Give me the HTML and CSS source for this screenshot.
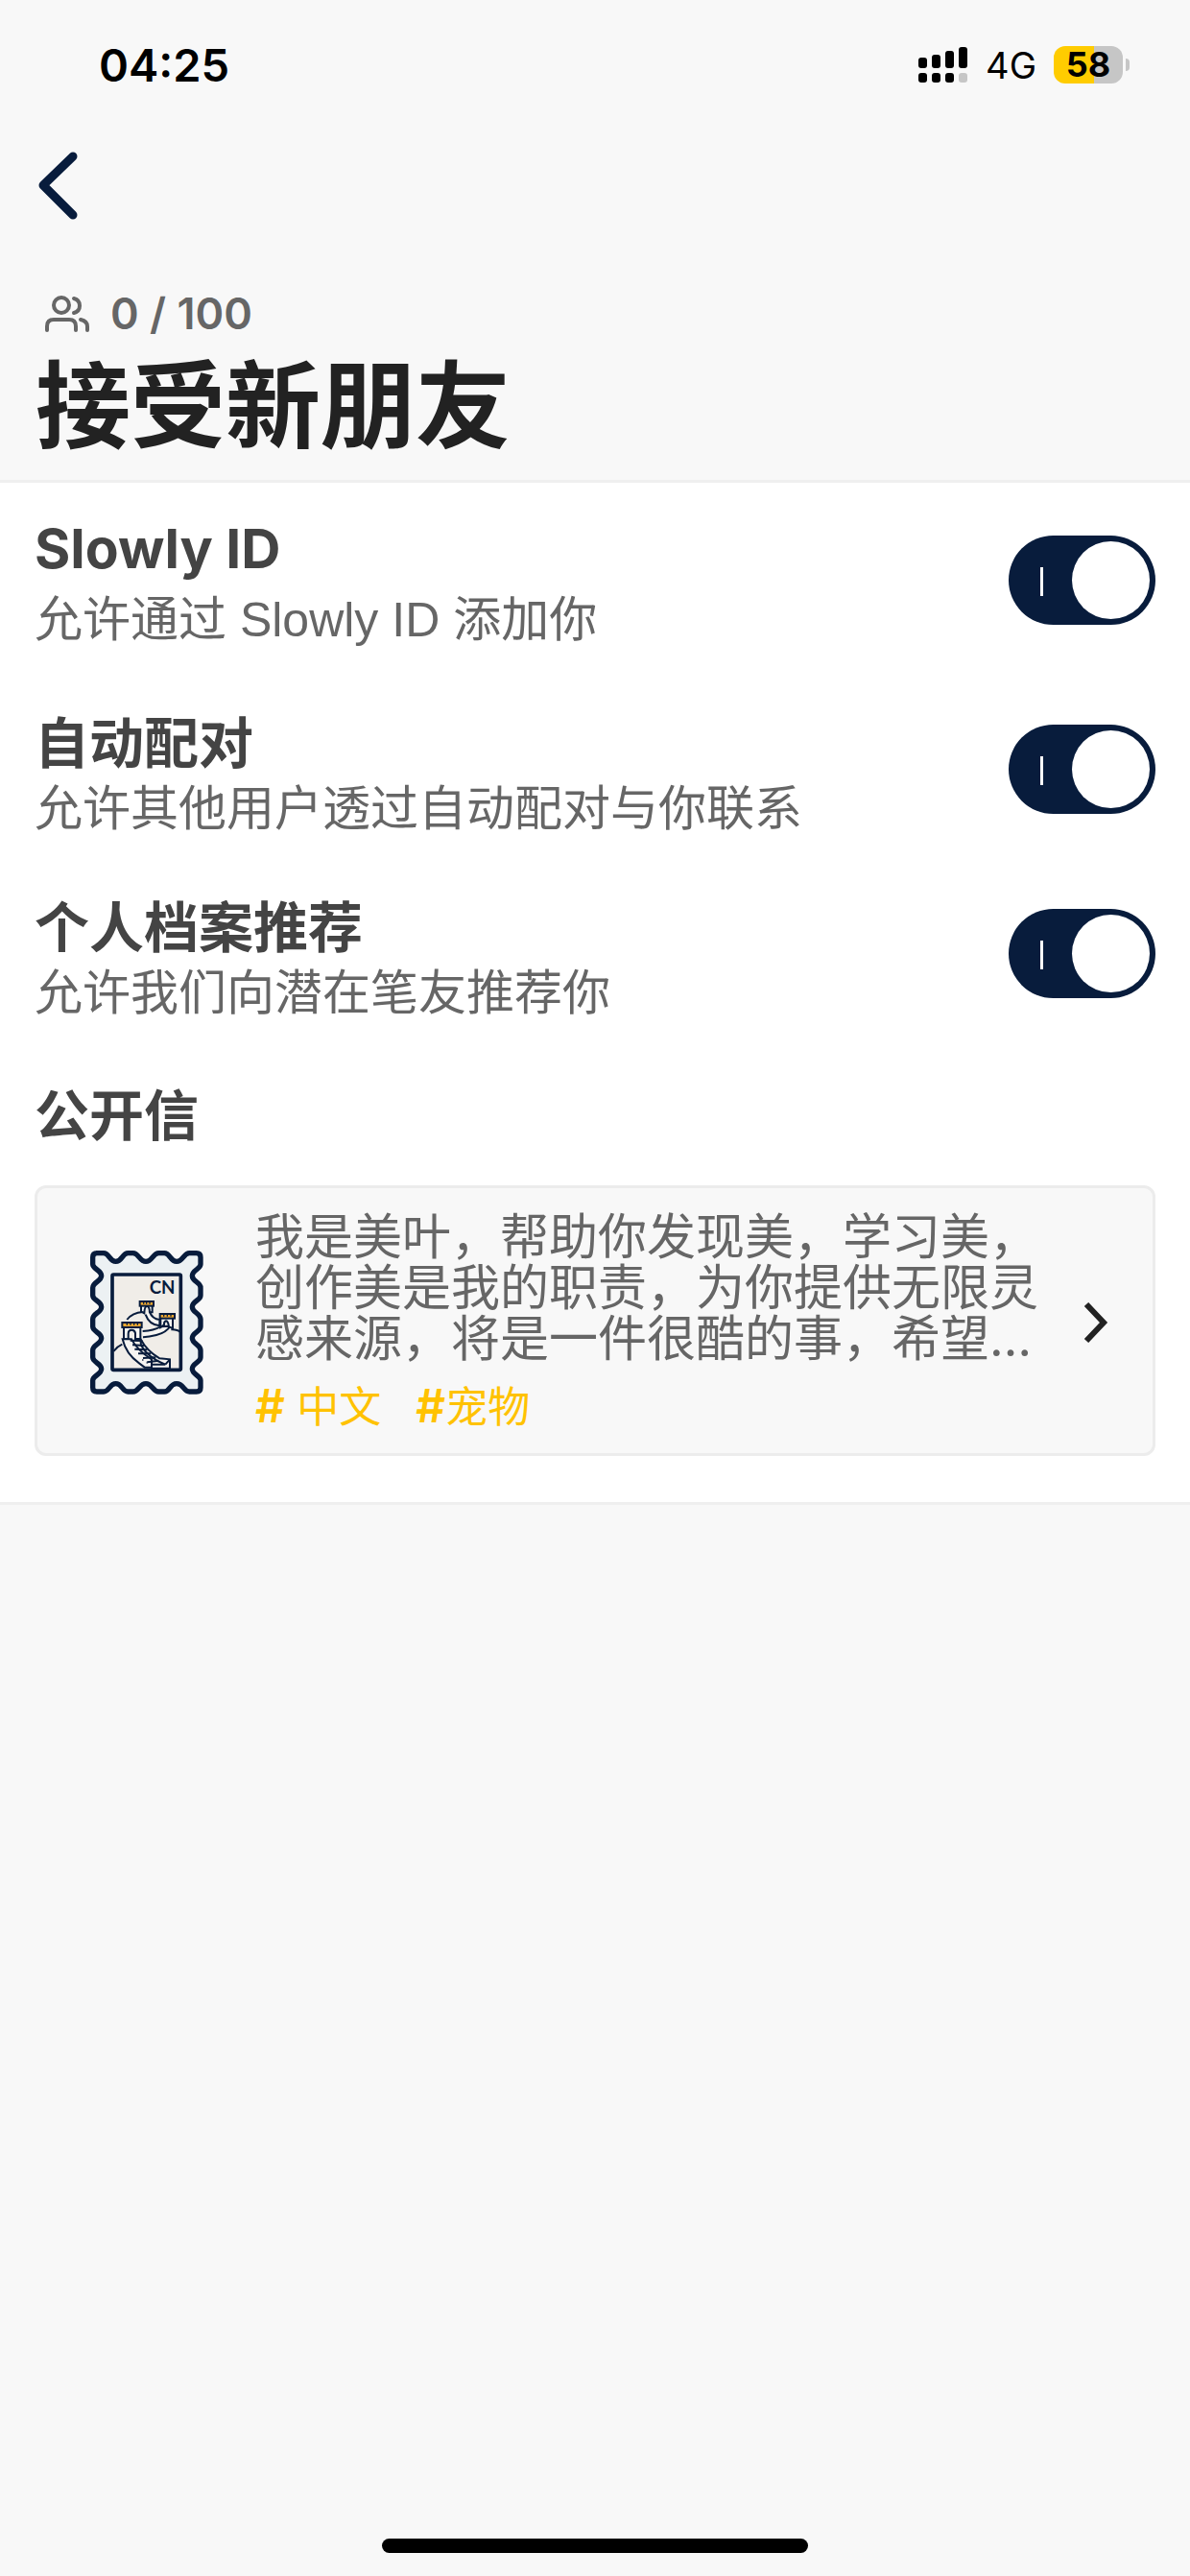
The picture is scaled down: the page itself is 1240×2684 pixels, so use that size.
FILE: index.html
```html
<!DOCTYPE html>
<html lang="zh-CN">
<head>
  <meta charset="UTF-8" />
  <meta name="viewport" content="width=device-width, initial-scale=1" />
  <title>接受新朋友</title>
  <link rel="stylesheet" href="styles.css">
</head>
<body>

<!-- Status bar -->
<div class="status-bar">
  <span class="time">04:25</span>
  <div class="status-right">
    <svg class="signal" viewBox="0 0 52 38" aria-hidden="true">
      <rect x="0" y="11" width="9" height="11" rx="3"/>
      <rect x="14" y="8" width="9" height="14" rx="3"/>
      <rect x="28" y="4" width="9" height="18" rx="3"/>
      <rect x="42" y="0" width="9" height="22" rx="3"/>
      <rect x="0" y="27" width="9" height="10" rx="3"/>
      <rect x="14" y="27" width="9" height="10" rx="3"/>
      <rect x="28" y="27" width="9" height="10" rx="3"/>
      <rect x="42" y="27" width="9" height="10" rx="3" fill="#c6c6c6"/>
    </svg>
    <span class="network">4G</span>
    <div class="battery">
      <span class="battery-level">58</span>
      <span class="battery-tip"></span>
    </div>
  </div>
</div>

<header>
  <button class="back" aria-label="返回">
    <svg viewBox="0 0 41 71" aria-hidden="true"><path d="M36 5 L5 35 L36 66"/></svg>
  </button>
  <p class="count">
    <svg viewBox="0 0 46 38" aria-hidden="true">
      <circle cx="17" cy="10" r="8"/>
      <path d="M2 36v-4c0-5 3-7 7-7h16c4 0 7 2 7 7v4M30 3c8 2 8 13 0 15M37 25c4 1 7 3 7 7v4"/>
    </svg>
    0 / 100
  </p>
  <h1>接受新朋友</h1>
</header>

<main>
  <div class="row first">
    <label for="by-id">
      <span class="name latin">Slowly ID</span>
      <span class="desc">允许通过 Slowly ID 添加你</span>
    </label>
    <input type="checkbox" class="toggle" id="by-id" checked>
  </div>
  <div class="row">
    <label for="auto-match">
      <span class="name">自动配对</span>
      <span class="desc">允许其他用户透过自动配对与你联系</span>
    </label>
    <input type="checkbox" class="toggle" id="auto-match" checked>
  </div>
  <div class="row">
    <label for="suggest">
      <span class="name">个人档案推荐</span>
      <span class="desc">允许我们向潜在笔友推荐你</span>
    </label>
    <input type="checkbox" class="toggle" id="suggest" checked>
  </div>

  <!-- Open letter -->
  <h2 class="name">公开信</h2>
  <a class="letter" href="#">
    <svg class="stamp" viewBox="0 0 354 450" aria-hidden="true">
      <path class="paper" d="M18 8H42C60 8 60 34 80 34S100 8 118 8H134C152 8 154 34 174 34S196 8 214 8H232C250 8 250 34 270 34S292 8 310 8H332Q345 8 345 21V43C345 58 319 60 319 79S345 98 345 116V140C345 156 319 158 319 176S345 196 345 214V238C345 254 319 256 319 274S345 294 345 312V334C345 350 319 352 319 370S345 390 345 406V428Q345 441 332 441H310C292 441 292 416 270 416S250 441 232 441H214C196 441 194 416 174 416S152 441 134 441H118C100 441 100 416 80 416S60 441 42 441H21Q8 441 8 428V406C8 390 35 388 35 370S8 350 8 334V312C8 294 35 292 35 274S8 254 8 238V214C8 196 35 194 35 176S8 156 8 140V116C8 98 35 97 35 79S8 58 8 43V21Q8 8 21 8Z"/>
      <rect class="frame" x="69" y="75" width="214" height="298" rx="4"/>
      <g class="wall">
        <path d="M73 315Q84 300 100 293M115 216Q132 194 164 192M253 247Q272 246 283 256"/>
        <path class="fill" d="M185 190Q194 214 217 216V235Q184 232 173 200M164 252Q200 250 219 238L250 236Q238 256 207 264Q184 270 165 271"/>
        <path class="fill" d="M159 163H194V193H186Q185 174 177 174Q170 174 169 196L159 190Z"/>
        <path class="fill" d="M220 203H258V243L246 238Q244 221 237 220Q230 222 231 232L220 240Z"/>
        <path class="fill" d="M105 231H157V276H141V258Q139 248 130 248Q119 248 119 260V277H105Z"/>
        <path class="fill" d="M101 277Q112 324 153 352L170 365H192V340Q146 310 129 277Z"/>
        <path class="fill" d="M157 276Q178 315 217 337L249 340V368H192V356H235Q181 335 159 296Z"/>
        <path d="M125 281L163 282M132 295L168 297M139 308L178 310M150 322L190 322M165 336L205 334M178 349L214 344M249 340L235 356"/>
        <path d="M163 342h3M176 350h3"/>
        <rect class="roof" x="155" y="159" width="43" height="14"/>
        <rect class="roof" x="218" y="198" width="46" height="14"/>
        <rect class="roof" x="100" y="225" width="61" height="15"/>
        <path class="notch" d="M167 162v5M176 162v5M186 162v5M230 200v6M241 200v6M252 200v6M115 227v6M126 227v6M137 227v6M148 227v6"/>
      </g>
      <text x="185" y="136">CN</text>
    </svg>
    <div class="letter-body">
      <p class="excerpt">我是美叶，帮助你发现美，学习美，创作美是我的职责，为你提供无限灵感来源，将是一件很酷的事，希望…</p>
      <p class="tags"><span><b>#</b> 中文</span><span><b>#</b>宠物</span></p>
    </div>
    <svg class="chevron" viewBox="0 0 26 42" aria-hidden="true"><path d="M3 2 L21 21 L3 40"/></svg>
  </a>
</main>

<div class="home-indicator"></div>

</body>
</html>
```
FILE: styles.css
```css
* { box-sizing: border-box; }
body {
  margin: 0;
  min-height: 100vh;
  display: flex;
  flex-direction: column;
  background-color: #f8f8f8;
  color: #222;
  font-family: Inter, "Noto Sans CJK SC", sans-serif;
}
h1, h2, p { margin: 0; }

/* Status bar */
.status-bar {
  display: flex;
  justify-content: space-between;
  align-items: center;
  height: 135px;
  padding: 0 70px 0 103px;
  color: #000;
}
.time {
  font-size: 47px;
  font-weight: 600;
}
.status-right {
  display: flex;
  align-items: center;
}
.signal {
  width: 52px;
  height: 38px;
}
.network {
  margin: 0 18px;
  font-size: 38px;
}
.battery {
  position: relative;
  width: 72px;
  height: 39px;
  border-radius: 12px;
  background: linear-gradient(to right, #ffcc00 58%, #c6c6c6 58%);
  text-align: center;
}
.battery-level {
  display: block;
  font-size: 36px;
  font-weight: 700;
  line-height: 39px;
}
.battery-tip {
  position: absolute;
  top: 13px;
  right: -7px;
  width: 4px;
  height: 13px;
  border-radius: 0 4px 4px 0;
  background-color: #c6c6c6;
}

/* Header */
header {
  padding: 23px 37px 9px;
  border-bottom: 3px solid #efefef;
}
.back {
  display: block;
  padding: 0 3px;
  border: none;
  background: none;
  cursor: pointer;
}
.back svg {
  display: block;
  width: 41px;
  height: 71px;
  fill: none;
  stroke: #081c3c;
  stroke-width: 9;
  stroke-linecap: round;
  stroke-linejoin: round;
}
.count {
  display: flex;
  align-items: center;
  gap: 22px;
  margin-top: 70px;
  padding-left: 10px;
  color: #666;
  font-size: 45px;
  font-weight: 600;
  line-height: 56px;
}
.count svg {
  width: 46px;
  height: 38px;
  fill: none;
  stroke: #666;
  stroke-width: 4;
  stroke-linecap: round;
}
h1 {
  font-size: 99px;
  font-weight: 700;
  line-height: 136px;
}

/* Settings */
main {
  padding: 5px 36px 48px;
  border-bottom: 3px solid #efefef;
  background-color: #fff;
}
.row {
  display: flex;
  justify-content: space-between;
  align-items: center;
  padding: 22px 0;
}
.row.first {
  margin-bottom: 5px;
}
.row label {
  flex: 1;
  padding-top: 12px;
}
.name {
  display: block;
  color: #444;
  font-size: 57px;
  font-weight: 700;
  line-height: 72px;
}
.latin {
  padding-bottom: 12px;
  line-height: 60px;
}
.desc {
  display: block;
  color: #666;
  font-family: "Liberation Sans", "Noto Sans CJK SC", sans-serif;
  font-size: 50px;
  line-height: 64px;
}
h2.name {
  padding: 38px 0 36px;
}
.toggle {
  appearance: none;
  position: relative;
  width: 153px;
  height: 93px;
  margin: 0;
  border-radius: 47px;
  background-color: #081c3c;
  cursor: pointer;
}
.toggle::before {
  content: "";
  position: absolute;
  top: 33px;
  left: 33px;
  width: 3px;
  height: 30px;
  background-color: #fff;
}
.toggle::after {
  content: "";
  position: absolute;
  top: 6px;
  right: 6px;
  width: 81px;
  height: 81px;
  border-radius: 50%;
  background-color: #fff;
}
.toggle:not(:checked) {
  background-color: #ccc;
}
.toggle:not(:checked)::after {
  right: 66px;
}

/* Letter card */
.letter {
  display: flex;
  align-items: center;
  padding: 24px 46px 20px 55px;
  border: 3px solid #ececec;
  border-radius: 12px;
  background-color: #f8f8f8;
  color: #666;
  text-decoration: none;
}
.stamp {
  flex: none;
  width: 118px;
  height: 150px;
}
.paper {
  fill: #ecf1f3;
  stroke: #081c3c;
  stroke-width: 16;
}
.frame {
  fill: #f0ede8;
  stroke: #081c3c;
  stroke-width: 11;
}
.wall {
  fill: none;
  stroke: #081c3c;
  stroke-width: 6;
}
.wall .fill { fill: #f6f5f2; }
.wall .roof { fill: #f0a830; }
.wall .notch { stroke-width: 4; }
.stamp text {
  fill: #081c3c;
  font-family: Lato, sans-serif;
  font-size: 56px;
  font-weight: 700;
}
.letter-body {
  flex: 1;
  margin: 0 30px 0 54px;
}
.excerpt {
  font-size: 51px;
  line-height: 53px;
}
.tags {
  display: flex;
  gap: 36px;
  margin-top: 16px;
  color: #ffc200;
  font-size: 44px;
  line-height: 56px;
}
.tags b {
  font-size: 48px;
  font-weight: 600;
}
.chevron {
  flex: none;
  width: 26px;
  height: 42px;
  fill: none;
  stroke: #222;
  stroke-width: 6;
}

.home-indicator {
  width: 444px;
  height: 15px;
  margin: auto auto 24px;
  border-radius: 8px;
  background-color: #000;
}
```
